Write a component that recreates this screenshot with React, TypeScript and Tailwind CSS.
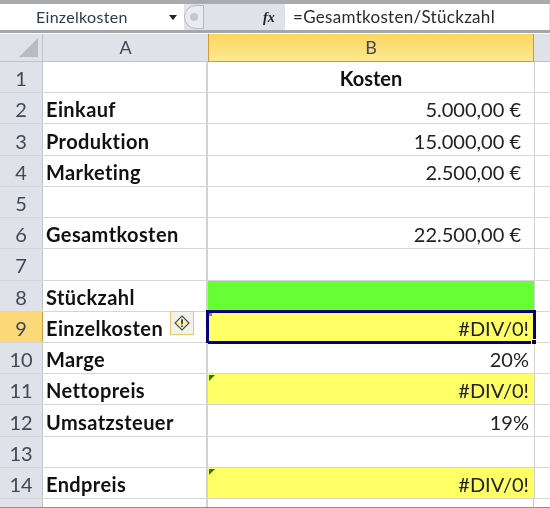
const rows = [
  { n: 1, a: '', b: 'Kosten', bold: true },
  { n: 2, a: 'Einkauf', b: '5.000,00 €' },
  { n: 3, a: 'Produktion', b: '15.000,00 €' },
  { n: 4, a: 'Marketing', b: '2.500,00 €' },
  { n: 5, a: '', b: '' },
  { n: 6, a: 'Gesamtkosten', b: '22.500,00 €' },
  { n: 7, a: '', b: '' },
  { n: 8, a: 'Stückzahl', b: '', fill: 'green' },
  { n: 9, a: 'Einzelkosten', b: '#DIV/0!', fill: 'yellow', active: true },
  { n: 10, a: 'Marge', b: '20%' },
  { n: 11, a: 'Nettopreis', b: '#DIV/0!', fill: 'yellow', flag: true },
  { n: 12, a: 'Umsatzsteuer', b: '19%' },
  { n: 13, a: '', b: '' },
  { n: 14, a: 'Endpreis', b: '#DIV/0!', fill: 'yellow', flag: true },
];

function Flag() {
  return <span className="absolute left-[1px] top-[1px] h-0 w-0 border-r-[6px] border-t-[6px] border-r-transparent border-t-[#1f7a1f]" />;
}

function ErrorTag() {
  return (
    <span className="absolute left-[127px] top-[-1px] flex h-[24px] w-[24px] items-center justify-center border border-[#f0c869] bg-[#f1f1ee]">
      <svg width="16" height="16" viewBox="0 0 16 16">
        <path d="M8 1 L15 8 L8 15 L1 8 Z" fill="#fbf3c4" stroke="#4a4a3a" strokeWidth="1.1" />
        <path d="M8 4.2 V9.2 M8 10.6 V12" stroke="#222" strokeWidth="1.6" />
      </svg>
    </span>
  );
}

export default function App() {
  return (
    <div className="flex h-[508px] w-[550px] flex-col overflow-hidden bg-white font-['Lato','Liberation_Sans',sans-serif] text-[#222] blur-[0.4px] [font-variant-ligatures:none]">
      <div className="h-[4px] bg-[#a9abae]" />
      <div className="flex h-[29px] items-stretch border-b-[3px] border-[#a4a6a9] bg-[#dfe2e8]">
        <div className="flex w-[184px] items-center bg-white pl-[36px] pr-[7px] text-[16px] tracking-[0.3px] text-[#2b3a4c]">
          <span className="flex-1">Einzelkosten</span>
          <span className="h-0 w-0 border-x-[4px] border-t-[5px] border-x-transparent border-t-[#222]" />
        </div>
        <div className="flex flex-1 items-center pr-[1px]">
          <div className="flex h-[24px] w-[20px] items-center justify-center rounded-l-full border border-[#b5b8bd] bg-[#e9ebef]">
            <span className="h-[8px] w-[8px] rounded-full bg-[#c5c8cd]" />
          </div>
          <span className="ml-[59px] w-[22px] font-['Liberation_Serif',serif] text-[14px] font-bold italic">fx</span>
          <div className="flex h-full flex-1 items-center bg-white pl-[8px] text-[17px] tracking-[0.3px] text-[#2b2b2b]">=Gesamtkosten/Stückzahl</div>
        </div>
      </div>

      <div className="flex h-[29px] pt-[1px] text-[18px] text-[#3e4956]">
        <div className="flex w-[43px] items-end justify-end border-r border-b border-[#c0c3c8] bg-[#dfe2e8] p-[4px]">
          <span className="h-0 w-0 border-b-[19px] border-l-[19px] border-b-[#b8bbc1] border-l-transparent" />
        </div>
        <div className="flex w-[165px] items-center justify-center border-b border-[#c0c3c8] bg-[#dfe2e8]">A</div>
        <div className="flex w-[326px] items-center justify-center border-x border-b border-[#d29a3e] bg-gradient-to-b from-[#fbd65f] to-[#fde88f]">B</div>
        <div className="flex-1 border-b border-[#c0c3c8] bg-[#dfe2e8]" />
      </div>

      <div className="flex h-[437px] flex-col">
        {rows.map((r) => (
          <div key={r.n} className="flex min-h-0 flex-1 border-b border-[#d4d6da] text-[20px] leading-[22px]">
            <div className={`flex w-[43px] items-center justify-center border-r pt-[2px] text-[#3e4956] ${r.active ? 'border-[#d29a3e] bg-[#fdd878]' : 'border-[#c0c3c8] bg-[#dfe2e8]'}`}>
              {r.n}
            </div>
            <div className="relative flex w-[165px] items-center border-r-2 border-[#d0d2d6] pl-[3px] pt-[2px] font-bold tracking-[0.4px] text-[#111]">
              {r.a}
              {r.active && <ErrorTag />}
            </div>
            <div
              className={`relative flex w-[326px] items-center px-[5px] pt-[2px] ${r.bold ? 'justify-center font-bold text-[#111]' : 'justify-end'} ${r.fill === 'green' ? 'bg-[#66ff33]' : ''} ${r.fill === 'yellow' ? 'bg-[#ffff66]' : ''} ${r.b.endsWith('€') ? 'pr-[13px]' : ''}`}
            >
              {r.b}
              {r.flag && <Flag />}
              {r.active && (
                <>
                  <span className="pointer-events-none absolute inset-[-2px] border-[3px] border-[#000080]" />
                  <span className="absolute left-[1px] top-[1px] h-[3px] w-[3px] bg-[#b060c0]" />
                  <span className="absolute bottom-[-3px] right-[-3px] h-[6px] w-[6px] border border-white bg-[#000040]" />
                </>
              )}
            </div>
            <div className="flex-1 border-l border-[#d0d2d6]" />
          </div>
        ))}
      </div>

      <div className="flex flex-1 border-b border-[#8f9195]">
        <div className="w-[43px] border-r border-[#c0c3c8] bg-[#dfe2e8]" />
        <div className="w-[165px] border-r-2 border-[#d0d2d6]" />
        <div className="w-[326px] border-r border-[#d0d2d6]" />
      </div>
    </div>
  );
}
